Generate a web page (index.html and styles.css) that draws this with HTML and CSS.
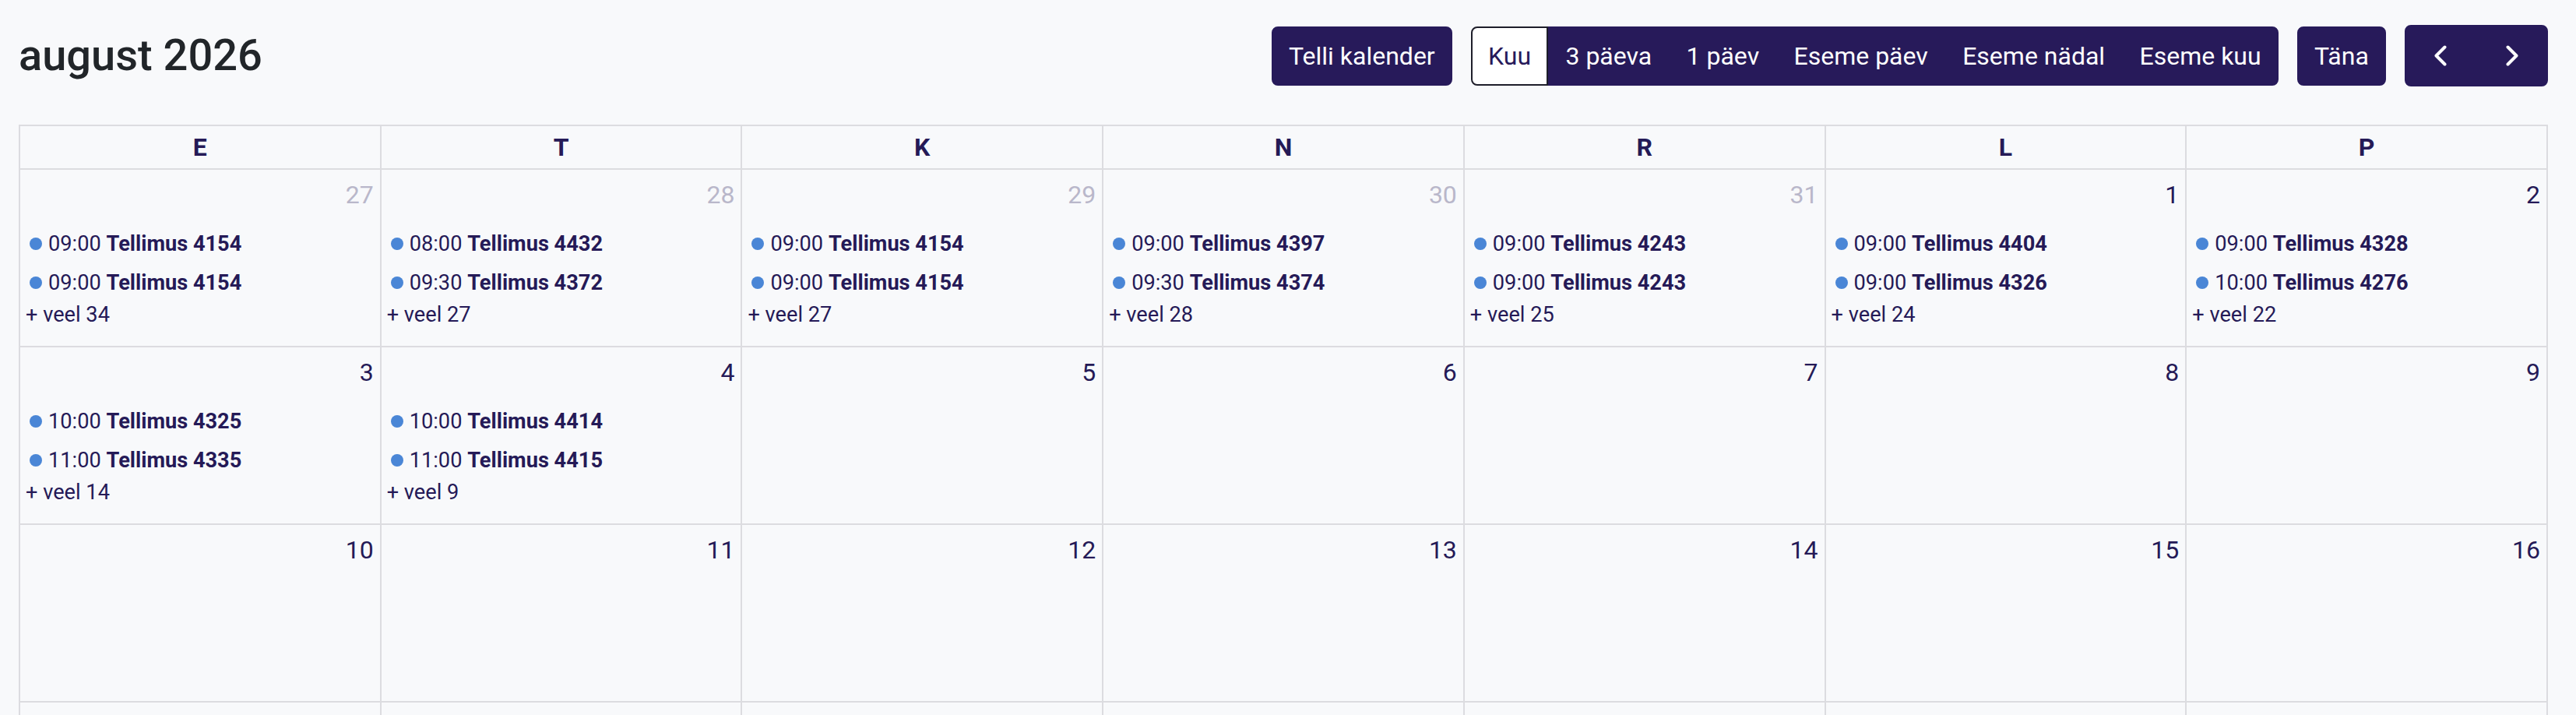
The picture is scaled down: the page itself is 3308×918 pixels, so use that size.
FILE: index.html
```html
<!DOCTYPE html>
<html lang="et">

<head>
    <meta charset="UTF-8">
    <meta name="viewport" content="width=device-width, initial-scale=1.0">
    <title>Kalender</title>
    <link rel="stylesheet" href="styles.css">
</head>

<body>
    <div class="calendar">
        <div class="toolbar">
            <h2 class="title">august 2026</h2>
            <div class="toolbar-right">
                <button class="btn">Telli kalender</button>
                <div class="btn-group">
                    <button class="btn active">Kuu</button>
                    <button class="btn">3 päeva</button>
                    <button class="btn">1 päev</button>
                    <button class="btn">Eseme päev</button>
                    <button class="btn">Eseme nädal</button>
                    <button class="btn">Eseme kuu</button>
                </div>
                <button class="btn">Täna</button>
                <div class="btn-group">
                    <button class="btn nav-btn" aria-label="eelmine">
                        <svg width="16" height="27" viewBox="0 0 16 27"><polyline points="13.5,2.5 2.5,13.5 13.5,24.5" /></svg>
                    </button>
                    <button class="btn nav-btn" aria-label="järgmine">
                        <svg width="16" height="27" viewBox="0 0 16 27"><polyline points="2.5,2.5 13.5,13.5 2.5,24.5" /></svg>
                    </button>
                </div>
            </div>
        </div>

        <div class="month-grid">
            <div class="col-head">E</div>
            <div class="col-head">T</div>
            <div class="col-head">K</div>
            <div class="col-head">N</div>
            <div class="col-head">R</div>
            <div class="col-head">L</div>
            <div class="col-head">P</div>

            <!-- week 1 -->
            <div class="day other">
                <div class="day-number">27</div>
                <div class="events">
                    <div class="event"><span class="dot"></span>09:00 <b>Tellimus 4154</b></div>
                    <div class="event"><span class="dot"></span>09:00 <b>Tellimus 4154</b></div>
                    <a class="more">+ veel 34</a>
                </div>
            </div>
            <div class="day other">
                <div class="day-number">28</div>
                <div class="events">
                    <div class="event"><span class="dot"></span>08:00 <b>Tellimus 4432</b></div>
                    <div class="event"><span class="dot"></span>09:30 <b>Tellimus 4372</b></div>
                    <a class="more">+ veel 27</a>
                </div>
            </div>
            <div class="day other">
                <div class="day-number">29</div>
                <div class="events">
                    <div class="event"><span class="dot"></span>09:00 <b>Tellimus 4154</b></div>
                    <div class="event"><span class="dot"></span>09:00 <b>Tellimus 4154</b></div>
                    <a class="more">+ veel 27</a>
                </div>
            </div>
            <div class="day other">
                <div class="day-number">30</div>
                <div class="events">
                    <div class="event"><span class="dot"></span>09:00 <b>Tellimus 4397</b></div>
                    <div class="event"><span class="dot"></span>09:30 <b>Tellimus 4374</b></div>
                    <a class="more">+ veel 28</a>
                </div>
            </div>
            <div class="day other">
                <div class="day-number">31</div>
                <div class="events">
                    <div class="event"><span class="dot"></span>09:00 <b>Tellimus 4243</b></div>
                    <div class="event"><span class="dot"></span>09:00 <b>Tellimus 4243</b></div>
                    <a class="more">+ veel 25</a>
                </div>
            </div>
            <div class="day">
                <div class="day-number">1</div>
                <div class="events">
                    <div class="event"><span class="dot"></span>09:00 <b>Tellimus 4404</b></div>
                    <div class="event"><span class="dot"></span>09:00 <b>Tellimus 4326</b></div>
                    <a class="more">+ veel 24</a>
                </div>
            </div>
            <div class="day">
                <div class="day-number">2</div>
                <div class="events">
                    <div class="event"><span class="dot"></span>09:00 <b>Tellimus 4328</b></div>
                    <div class="event"><span class="dot"></span>10:00 <b>Tellimus 4276</b></div>
                    <a class="more">+ veel 22</a>
                </div>
            </div>

            <!-- week 2 -->
            <div class="day">
                <div class="day-number">3</div>
                <div class="events">
                    <div class="event"><span class="dot"></span>10:00 <b>Tellimus 4325</b></div>
                    <div class="event"><span class="dot"></span>11:00 <b>Tellimus 4335</b></div>
                    <a class="more">+ veel 14</a>
                </div>
            </div>
            <div class="day">
                <div class="day-number">4</div>
                <div class="events">
                    <div class="event"><span class="dot"></span>10:00 <b>Tellimus 4414</b></div>
                    <div class="event"><span class="dot"></span>11:00 <b>Tellimus 4415</b></div>
                    <a class="more">+ veel 9</a>
                </div>
            </div>
            <div class="day"><div class="day-number">5</div></div>
            <div class="day"><div class="day-number">6</div></div>
            <div class="day"><div class="day-number">7</div></div>
            <div class="day"><div class="day-number">8</div></div>
            <div class="day"><div class="day-number">9</div></div>

            <!-- week 3 -->
            <div class="day"><div class="day-number">10</div></div>
            <div class="day"><div class="day-number">11</div></div>
            <div class="day"><div class="day-number">12</div></div>
            <div class="day"><div class="day-number">13</div></div>
            <div class="day"><div class="day-number">14</div></div>
            <div class="day"><div class="day-number">15</div></div>
            <div class="day"><div class="day-number">16</div></div>

            <!-- week 4, only its top edge is in view -->
            <div class="day"></div>
            <div class="day"></div>
            <div class="day"></div>
            <div class="day"></div>
            <div class="day"></div>
            <div class="day"></div>
            <div class="day"></div>
        </div>
    </div>
</body>

</html>
```

FILE: styles.css
```css
body {
    font-family: Roboto, "Liberation Sans", sans-serif;
    background-color: #f8f9fb;
    color: #251a57;
    margin: 0;
    overflow: hidden;
}

.calendar {
    padding: 32px 36px 0 24px;
}

.toolbar {
    display: flex;
    justify-content: space-between;
    align-items: center;
    margin-bottom: 49px;
}

.title {
    margin: 0;
    font-size: 56px;
    font-weight: 500;
    line-height: 1.2;
    color: #212529;
}

.toolbar-right {
    display: flex;
    align-items: center;
    gap: 24px;
}

.btn {
    font-family: Roboto, "Liberation Sans", sans-serif;
    font-size: 32px;
    line-height: 48px;
    padding: 12px 20.2px;
    background-color: #271a5a;
    color: #fff;
    border: 2px solid #271a5a;
    border-radius: 8px;
    cursor: pointer;
}

.btn-group {
    display: flex;
}

.btn-group .btn {
    border-radius: 0;
}

.btn-group .btn:first-child {
    border-top-left-radius: 8px;
    border-bottom-left-radius: 8px;
}

.btn-group .btn:last-child {
    border-top-right-radius: 8px;
    border-bottom-right-radius: 8px;
}

.btn.active {
    background-color: #fff;
    color: #271a5a;
    border-color: #1e1e2a;
}

.nav-btn {
    display: flex;
    align-items: center;
    justify-content: center;
    width: 92px;
    height: 79px;
    padding: 0;
}

.nav-btn svg {
    display: block;
}

.nav-btn polyline {
    fill: none;
    stroke: #fff;
    stroke-width: 4;
    stroke-linecap: round;
    stroke-linejoin: round;
}

.month-grid {
    display: grid;
    grid-template-columns: repeat(7, 1fr);
    border-top: 2px solid #dcdce0;
    border-left: 2px solid #dcdce0;
}

.col-head {
    height: 56px;
    box-sizing: border-box;
    padding: 3px 8px;
    text-align: center;
    font-size: 32px;
    font-weight: 700;
    line-height: 48px;
    border-right: 2px solid #dcdce0;
    border-bottom: 2px solid #dcdce0;
}

.day {
    height: 228px;
    box-sizing: border-box;
    border-right: 2px solid #dcdce0;
    border-bottom: 2px solid #dcdce0;
}

.day-number {
    text-align: right;
    font-size: 32px;
    line-height: 48px;
    padding: 8px 8px 0 8px;
}

.day.other .day-number {
    color: #b9b7ca;
}

.events {
    margin-top: 15px;
    font-size: 27.2px;
}

.event {
    display: flex;
    align-items: center;
    line-height: 40.8px;
    padding: 4px 0;
    margin: 1px 4px 0;
    white-space: nowrap;
}

.event b {
    font-weight: 700;
    margin-left: 0.25em;
}

.dot {
    width: 16px;
    height: 16px;
    border-radius: 50%;
    background-color: #4a86d6;
    margin: 0 8px;
}

.more {
    display: block;
    line-height: 32px;
    margin-left: 7px;
    cursor: pointer;
}
```
